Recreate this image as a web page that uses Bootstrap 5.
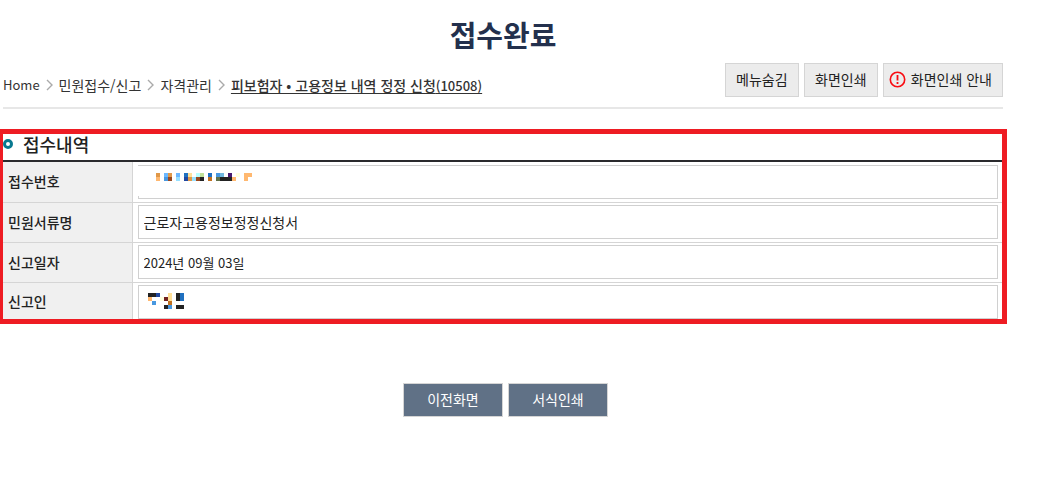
<!DOCTYPE html>
<html lang="ko">
<head>
<meta charset="utf-8">
<meta name="viewport" content="width=device-width, initial-scale=1">
<title>접수완료</title>
<link href="https://cdn.jsdelivr.net/npm/bootstrap@5.3.0/dist/css/bootstrap.min.css" rel="stylesheet">
<style>
  body { font-family: "Noto Sans CJK KR", sans-serif; font-size: 14px; line-height: 20px; color: #222; background: #fff; }
  .page { padding-right: 55px; }
  .inner { padding-left: 3px; padding-right: 4px; }
  .page-title { font-size: 29px; line-height: 40px; font-weight: 700; color: #23304d; padding-top: 14px; margin-bottom: 9px; }
  .top-bar { border-bottom: 2px solid #e7e7e7; padding-bottom: 10px; margin-bottom: 20px; }
  .crumbs { gap: 5px; padding-top: 10px; }
  .crumbs a { color: #333; text-decoration: none; }
  .crumbs a.current { font-weight: 500; text-decoration: underline; text-underline-offset: 2px; }
  .latin { font-size: 13px; }
  .tools { gap: 5px; }
  .btn-tool, .btn-main { height: 34px; padding: 0 10px 2px; border: 1px solid #d5d5d5; border-radius: 0; font-size: 14px; line-height: 20px; }
  .btn-tool, .btn-tool:hover { min-width: 74px; background: #ececec; color: #222; border-color: #d5d5d5; }
  .btn-tool.with-icon { padding-left: 5px; gap: 5px; }
  .btn-main, .btn-main:hover { width: 100px; background: #607186; color: #fff; border-color: #d5d5d5; }
  .framed { border: 5px solid #ee1c23; border-left-width: 3px; }
  .section-title { font-size: 18px; line-height: 26px; font-weight: 500; gap: 10px; height: 28px; padding-bottom: 6px; border-bottom: 2px solid #2a2a2d; }
  .info th { width: 129px; padding: 0 5px 2px; background: #f0f0f0; font-weight: 500; border-right: 1px solid #d5d5d5; }
  .info td { padding: 2px 4px 3px 5px; }
  .info tr { border-bottom: 1px solid #d5d5d5; }
  .info tr:first-child td { padding-top: 3px; }
  .info tr:last-child { border-bottom: 0; }
  .info tr:last-child th, .info tr:last-child td { padding-bottom: 0; }
  .field { display: block; width: 100%; height: 34px; padding: 0 5px; border: 1px solid #d0d0d0; border-radius: 0; background: #fff; color: #222; font-size: 14px; line-height: 20px; }
  .field.latin { font-size: 13px; }
  .masked { padding: 0; }
  .masked svg { display: block; margin-left: -1px; }
  .actions { gap: 5px; padding: 59px 0 0 5px; }
</style>
</head>
<body>
<main class="page">
  <div class="inner">
    <h1 class="page-title text-center">접수완료</h1>
    <div class="top-bar d-flex justify-content-between">
      <nav class="crumbs d-flex align-items-center" aria-label="위치">
        <a href="#" class="latin">Home</a>
        <svg width="9" height="12" viewBox="0 0 9 12" fill="none" stroke="#aaa" stroke-width="1.4"><path d="M2 1l5 5-5 5"/></svg>
        <a href="#">민원접수/신고</a>
        <svg width="9" height="12" viewBox="0 0 9 12" fill="none" stroke="#aaa" stroke-width="1.4"><path d="M2 1l5 5-5 5"/></svg>
        <a href="#">자격관리</a>
        <svg width="9" height="12" viewBox="0 0 9 12" fill="none" stroke="#aaa" stroke-width="1.4"><path d="M2 1l5 5-5 5"/></svg>
        <a href="#" class="current" aria-current="page">피보험자 • 고용정보 내역 정정 신청<span class="latin">(10508)</span></a>
      </nav>
      <div class="tools d-flex">
        <button type="button" class="btn btn-tool">메뉴숨김</button>
        <button type="button" class="btn btn-tool">화면인쇄</button>
        <button type="button" class="btn btn-tool with-icon d-flex align-items-center"><svg width="17" height="17" viewBox="0 0 17 17" fill="none" stroke="#f80c12"><circle cx="8.5" cy="8.5" r="7.2" stroke-width="1.6"/><path d="M8.5 4v5.6M8.5 11v2" stroke-width="1.8"/></svg>화면인쇄 안내</button>
      </div>
    </div>
  </div>

  <section class="framed">
    <h2 class="section-title d-flex align-items-center m-0"><svg width="10" height="10" viewBox="0 0 10 10" fill="none" stroke="#087990" stroke-width="3"><circle cx="5" cy="5" r="3.5"/></svg>접수내역</h2>
    <table class="info w-100">
      <tbody>
        <tr>
          <th scope="row">접수번호</th>
          <td><div class="field masked"><svg width="120" height="30" shape-rendering="crispEdges" aria-hidden="true">
            <path fill="#fff" d="M0 0h120v30H0z"/>
            <g transform="translate(18 7)">
              <path fill="#e09848" d="M0 0h4v4H0zM12 0h4v4h-4zM32 4h4v4h-4z"/>
              <path fill="#ffb870" d="M0 4h4v4H0zM76 4h4v4h-4zM88 0h8v4h-4v4h-4z"/>
              <path fill="#6cb8ff" d="M8 0h4v4H8zM20 0h4v4h-4z"/>
              <path fill="#4898e0" d="M8 4h4v4H8zM60 0h4v4h-4z"/>
              <path fill="#984820" d="M12 4h4v4h-4zM40 4h4v4h-4z"/>
              <path fill="#98e0ff" d="M20 4h4v4h-4zM36 4h4v4h-4z"/>
              <path fill="#2070c0" d="M28 0h4v4h-4zM52 0h4v4h-4z"/>
              <path fill="#2048a0" d="M28 4h4v4h-4z"/>
              <path fill="#ffe098" d="M32 0h4v4h-4z"/>
              <path fill="#b8ffff" d="M40 0h4v4h-4z"/>
              <path fill="#c0e098" d="M44 0h4v4h-4z"/>
              <path fill="#222" d="M44 4h4v4h-4zM64 4h12v4H64z"/>
              <path fill="#c07020" d="M52 4h4v4h-4z"/>
              <path fill="#607048" d="M60 4h4v4h-4z"/>
              <path fill="#70b8e0" d="M64 0h4v4h-4z"/>
              <path fill="#481870" d="M72 0h4v4h-4z"/>
              <path fill="#ffffe0" d="M80 0h4v4h-4z"/>
            </g></svg></div></td>
        </tr>
        <tr>
          <th scope="row"><label for="doc">민원서류명</label></th>
          <td><input id="doc" class="field" type="text" value="근로자고용정보정정신청서" readonly></td>
        </tr>
        <tr>
          <th scope="row"><label for="date">신고일자</label></th>
          <td><input id="date" class="field latin" type="text" value="2024년 09월 03일" readonly></td>
        </tr>
        <tr>
          <th scope="row">신고인</th>
          <td><div class="field masked"><svg width="60" height="30" shape-rendering="crispEdges" aria-hidden="true">
            <g transform="translate(10 7)">
              <path fill="#222" d="M0 0h8v4H0zM28 0h4v8h-4zM16 12h4v4h-4zM28 12h8v4h-8z"/>
              <path fill="#2048a0" d="M8 0h4v4H8z"/>
              <path fill="#ffb870" d="M0 4h4v4H0z"/>
              <path fill="#ffffe0" d="M12 4h4v4h-4z"/>
              <path fill="#702020" d="M16 4h4v4h-4z"/>
              <path fill="#ffe098" d="M20 0h4v8h-4z"/>
              <path fill="#2070c0" d="M32 0h4v8h-4z"/>
              <path fill="#4898e0" d="M4 8h4v4H4zM20 12h4v4h-4z"/>
              <path fill="#c07020" d="M20 8h4v4h-4z"/>
            </g></svg></div></td>
        </tr>
      </tbody>
    </table>
  </section>

  <div class="inner">
    <div class="actions d-flex justify-content-center">
      <button type="button" class="btn btn-main">이전화면</button>
      <button type="button" class="btn btn-main">서식인쇄</button>
    </div>
  </div>
</main>
<script src="https://cdn.jsdelivr.net/npm/bootstrap@5.3.0/dist/js/bootstrap.bundle.min.js"></script>
</body>
</html>
